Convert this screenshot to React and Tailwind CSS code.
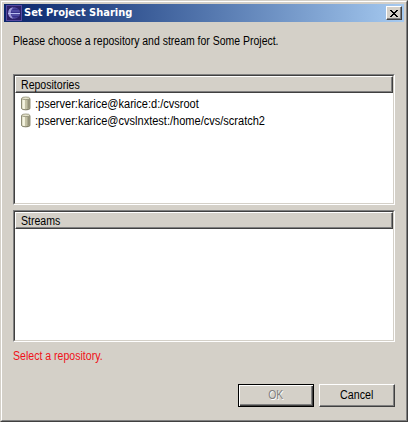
function TitleBar() {
  return (
    <div className="flex h-[18px] items-center bg-linear-to-r from-[#0a246a] to-[#a6caf0] pr-[2px] pl-[2px]">
      <svg className="h-4 w-4 shrink-0" viewBox="0 0 16 16">
        <rect x=".5" y=".5" width="15" height="15" fill="#2c2068" stroke="#5548a0" />
        <circle cx="8" cy="8" r="5.8" fill="#5a52a8" />
        <path d="M7 2.3A5.8 5.8 0 0 0 7 13.7A9 9 0 0 1 7 2.3Z" fill="#a09cd8" />
        <circle cx="9.3" cy="8" r="4.6" fill="#37318a" />
        <path d="M5.5 6h8M5.5 10h8" stroke="#6a64b8" />
        <path d="M2 8.5h12" stroke="#b9bdf0" />
      </svg>
      <span className="ml-[2px] grow font-['DejaVu_Sans_Condensed','DejaVu_Sans',sans-serif] text-[11px] font-bold whitespace-nowrap text-white">
        Set Project Sharing
      </span>
      <button
        aria-label="Close"
        className="flex h-[14px] w-4 items-center justify-center border border-t-white border-r-[#404040] border-b-[#404040] border-l-white bg-[#d4d0c8] shadow-[inset_-1px_-1px_0_#808080]"
      >
        <svg className="h-[7px] w-2" viewBox="0 0 8 7" shapeRendering="crispEdges">
          <path d="M0 0h2v1h1v1h2V1h1V0h2v1H7v1H6v1H5v1h1v1h1v1h1v1H6V6H5V5H3v1H2v1H0V6h1V5h1V4h1V3H2V2H1V1H0Z" />
        </svg>
      </button>
    </div>
  );
}

function RepoIcon() {
  return (
    <svg className="h-[15px] w-[10px] shrink-0" viewBox="0 0 10 15">
      <path d="M.7 2.5V12.7C1.6 14.2 8 14.2 8.9 12.7V2.5Z" fill="#c3c1a4" stroke="#77755c" />
      <path d="M1.3 3h2.6v10.2L1.3 12.5Z" fill="#f6f5e2" />
      <path d="M6.5 3h1.9v9.6l-1.9.5Z" fill="#96947a" />
      <ellipse cx="4.8" cy="2.3" rx="4" ry="1.3" fill="#e6e4cc" stroke="#8d8b74" strokeWidth=".8" />
    </svg>
  );
}

function Table({ title, className, children }) {
  return (
    <div
      className={`border border-t-[#808080] border-r-white border-b-white border-l-[#808080] ${className}`}
    >
      <div className="h-full border border-t-[#404040] border-r-[#d4d0c8] border-b-[#d4d0c8] border-l-[#404040] bg-white">
        <div className="flex h-[17px] items-center border border-t-white border-r-[#404040] border-b-[#404040] border-l-white bg-[#d4d0c8] pl-[5px] shadow-[inset_-1px_-1px_0_#808080]">
          <span className="origin-left scale-x-[0.88]">{title}</span>
        </div>
        {children}
      </div>
    </div>
  );
}

function Repo({ children }) {
  return (
    <div className="flex h-[17px] items-center gap-[4px] pl-[6px]">
      <RepoIcon />
      <span className="origin-left scale-x-[0.919]">{children}</span>
    </div>
  );
}

export default function App() {
  return (
    <div className="h-[422px] w-[408px] border border-t-[#d4d0c8] border-r-[#404040] border-b-[#404040] border-l-[#d4d0c8] bg-[#d4d0c8] font-['Liberation_Sans',Arial,sans-serif] text-[12px] leading-[14px] whitespace-nowrap text-black">
      <div className="flex h-full flex-col border border-t-white border-r-[#808080] border-b-[#808080] border-l-white p-[2px]">
        <TitleBar />
        <div className="flex flex-col pt-[12px] pr-[9px] pl-[9px]">
          <div className="h-[40px]">
            <span className="inline-block origin-left scale-x-[0.873]">
              Please choose a repository and stream for Some Project.
            </span>
          </div>
          <Table title="Repositories" className="h-[131px]">
            <div className="pt-[2px]">
              <Repo>:pserver:karice@karice:d:/cvsroot</Repo>
              <Repo>:pserver:karice@cvslnxtest:/home/cvs/scratch2</Repo>
            </div>
          </Table>
          <Table title="Streams" className="mt-[5px] h-[132px]" />
          <div className="mt-[7px] h-[14px] text-[#f01018]">
            <span className="inline-block origin-left scale-x-[0.88]">Select a repository.</span>
          </div>
          <div className="mt-[21px] flex justify-end gap-[5px]">
            <button
              disabled
              className="h-[23px] w-[76px] border border-black pb-[2px] text-[#808080] shadow-[inset_1px_1px_0_#fff,inset_-1px_-1px_0_#404040,inset_-2px_-2px_0_#808080] [text-shadow:1px_1px_0_#fff]"
            >
              <span className="inline-block scale-x-[0.87]">OK</span>
            </button>
            <button className="h-[23px] w-[76px] border border-t-white border-r-[#404040] border-b-[#404040] border-l-white pb-[2px] shadow-[inset_-1px_-1px_0_#808080]">
              <span className="inline-block scale-x-[0.89]">Cancel</span>
            </button>
          </div>
        </div>
      </div>
    </div>
  );
}
